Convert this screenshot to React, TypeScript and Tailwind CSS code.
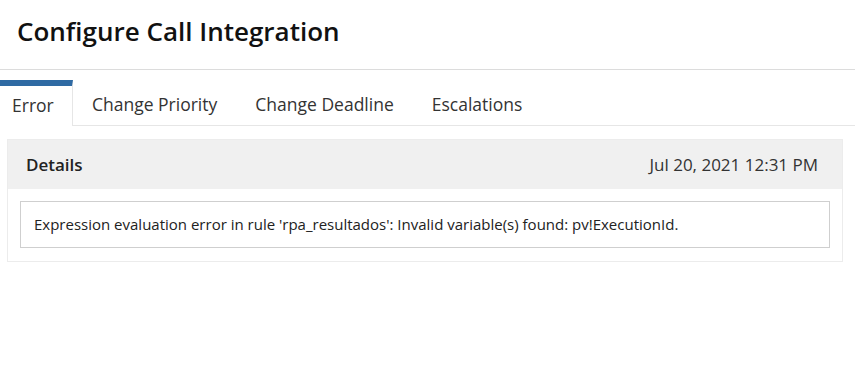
import React from "react";

export default function App() {
  const tabs = ["Error", "Change Priority", "Change Deadline", "Escalations"];
  return (
    <div className="w-[855px] h-[368px] bg-white text-[#222] overflow-hidden" style={{ fontFamily: '"Open Sans", "Liberation Sans", sans-serif' }}>
      <div className="h-[70px] flex items-center pl-[17px] border-b border-[#dcdcdc]">
        <h1 className="text-[26px] font-semibold text-[#111] leading-none -mt-[7px]">Configure Call Integration</h1>
      </div>
      <div className="pt-[10px] flex border-b border-[#e6e6e6] h-[56px]">
        {tabs.map((t, i) =>
          i === 0 ? (
            <div key={t} className="w-[73px] border-t-[6px] border-t-[#2f6aa3] border-r border-r-[#e6e6e6] bg-white -mb-px flex items-center pl-[12px] text-[17.5px] text-[#333]">
              <span className="-mt-[2px]">{t}</span>
            </div>
          ) : (
            <div key={t} className="px-[19px] pt-[6px] flex items-center text-[17.5px] text-[#333]">
              <span className="-mt-[2px]">{t}</span>
            </div>
          )
        )}
      </div>
      <div className="ml-[7px] mr-[12px] mt-[13px] border border-[#ececec]">
        <div className="h-[49px] bg-[#f0f0f0] flex items-center justify-between pl-[18px] pr-[24px]">
          <span className="text-[17px] font-semibold text-[#222]">Details</span>
          <span className="text-[17px] text-[#333]">Jul 20, 2021 12:31 PM</span>
        </div>
        <div className="px-[12px] pt-[12px] pb-[13px]">
          <div className="h-[47px] border border-[#cfcfcf] flex items-center pl-[13px] text-[15px] text-[#222]">
            Expression evaluation error in rule 'rpa_resultados': Invalid variable(s) found: pv!ExecutionId.
          </div>
        </div>
      </div>
    </div>
  );
}
